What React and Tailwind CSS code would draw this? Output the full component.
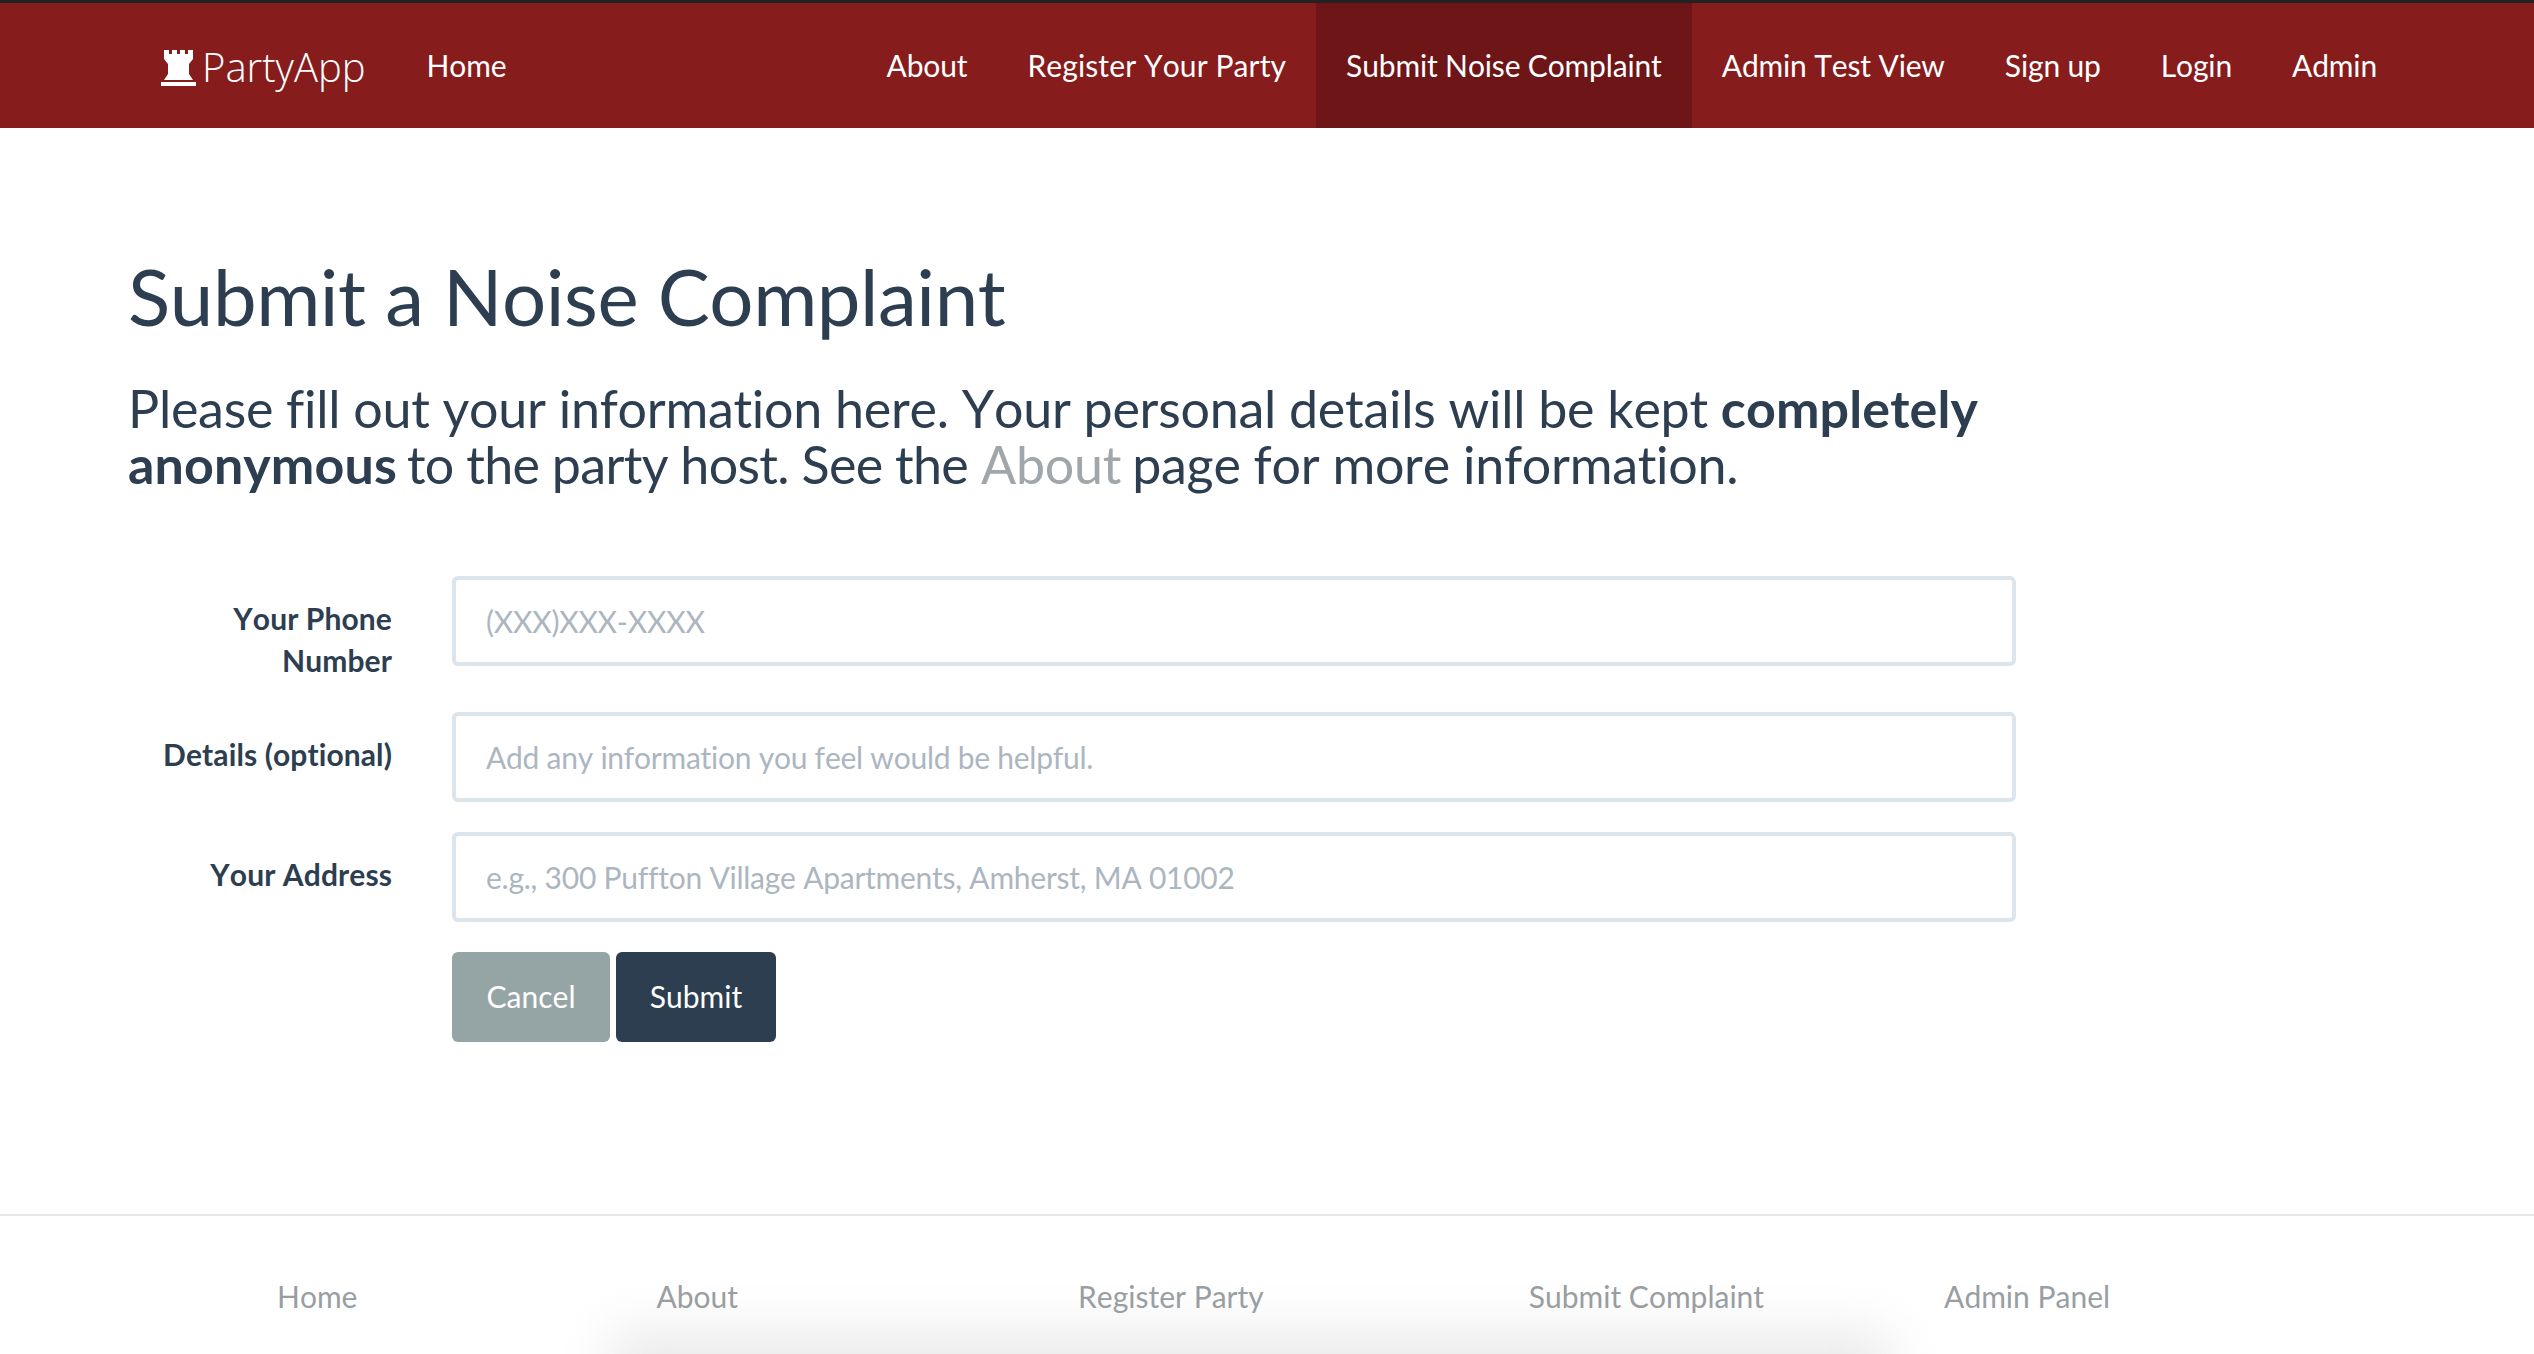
import React from 'react';

const navLinks = [
  { label: 'About', className: 'ml-auto' },
  { label: 'Register Your Party', className: 'tracking-[0.1px]' },
  { label: 'Submit Noise Complaint', active: true },
  { label: 'Admin Test View' },
  { label: 'Sign up' },
  { label: 'Login' },
  { label: 'Admin' },
];

const footerLinks = [
  { label: 'Home', className: 'ml-[277px]' },
  { label: 'About', className: 'ml-[299px]' },
  { label: 'Register Party', className: 'ml-[340px]' },
  { label: 'Submit Complaint', className: 'ml-[265px]' },
  { label: 'Admin Panel', className: 'ml-[180px]' },
];

const fields = [
  { label: 'Your Phone Number', placeholder: '(XXX)XXX-XXXX', rowClass: 'h-[136px]' },
  { label: 'Details (optional)', placeholder: 'Add any information you feel would be helpful.', rowClass: 'h-[120px]' },
  { label: 'Your Address', placeholder: 'e.g., 300 Puffton Village Apartments, Amherst, MA 01002', rowClass: 'h-[120px]' },
];

const Tower = () => (
  <svg width="35" height="36" viewBox="0 0 35 36" className="mt-[3px] shrink-0" fill="#fff">
    <path d="M3 0h5v4h3V0h5v4h3V0h5v4h3V0h5v9l-4 5v10l4 6H3l4-6V14L3 9z" />
    <rect x="0" y="32" width="35" height="4" />
  </svg>
);

const App = () => {
  return (
    <div className="relative h-[1354px] overflow-hidden bg-white font-['Lato',sans-serif] text-[#2c3e50] [font-kerning:none] [font-variant-ligatures:none]">
      <div className="h-[3px] bg-[#222]"></div>
      <nav className="flex h-[125px] items-center bg-[#871c1d] pl-[161px] pr-[127px] text-[30px] tracking-[-0.15px] text-white">
        <a className="mt-[2px] flex items-center gap-[6px] font-['Open_Sans',sans-serif] text-[40px] font-light tracking-normal">
          <Tower />
          PartyApp
        </a>
        <a className="ml-[61px]">Home</a>
        {navLinks.map((link) => (
          <a
            key={link.label}
            className={`flex h-full items-center px-[30px] ${link.active ? 'bg-[#6e1617]' : ''} ${link.className || ''}`}
          >
            {link.label}
          </a>
        ))}
      </nav>

      <main className="pl-[128px] pt-[126px]">
        <h1 className="text-[78px] leading-[1.1] tracking-[-0.45px]">Submit a Noise Complaint</h1>
        <p className="mt-[40px] w-[1920px] text-[52px] leading-[56px] tracking-[-0.28px]">
          Please fill out your information here. Your personal details will be kept <strong className="tracking-[0.1px]">completely anonymous</strong> <span className="ml-[-3px] tracking-[-0.7px]">to the party host. See the</span> <a className="text-[#a0a6aa]">About</a> <span className="ml-[-2px]">page for more information.</span>
        </p>

        <form className="mt-[84px]">
          {fields.map((field) => (
            <div key={field.label} className={`flex ${field.rowClass}`}>
              <label className="w-[264px] pt-[21px] text-right text-[30px] font-bold leading-[42px] tracking-[0.1px]">
                {field.label}
              </label>
              <input
                placeholder={field.placeholder}
                className="ml-[60px] h-[90px] w-[1564px] rounded-[6px] border-4 border-[#dce4ec] px-[30px] text-[30px] tracking-[-0.25px] placeholder:text-[#acb6c0]"
              />
            </div>
          ))}
          <div className="ml-[324px] flex gap-[6px]">
            <button type="button" className="h-[90px] w-[158px] rounded-[6px] bg-[#95a5a6] text-[30px] text-white">
              Cancel
            </button>
            <button type="button" className="h-[90px] w-[160px] rounded-[6px] bg-[#2c3e50] text-[30px] text-white">
              Submit
            </button>
          </div>
        </form>
      </main>

      <footer className="absolute inset-x-0 top-[1214px] h-[140px] border-t-2 border-[#e7e7e7]">
        <div className="flex pt-[58px] text-[30px] text-[#999ea2]">
          {footerLinks.map((link) => (
            <a key={link.label} className={`relative z-10 shrink-0 ${link.className}`}>{link.label}</a>
          ))}
        </div>
        <div className="absolute left-[610px] top-[115px] h-[80px] w-[1280px] bg-[#eaeaea] blur-[26px]"></div>
      </footer>
    </div>
  );
};

export default App;
